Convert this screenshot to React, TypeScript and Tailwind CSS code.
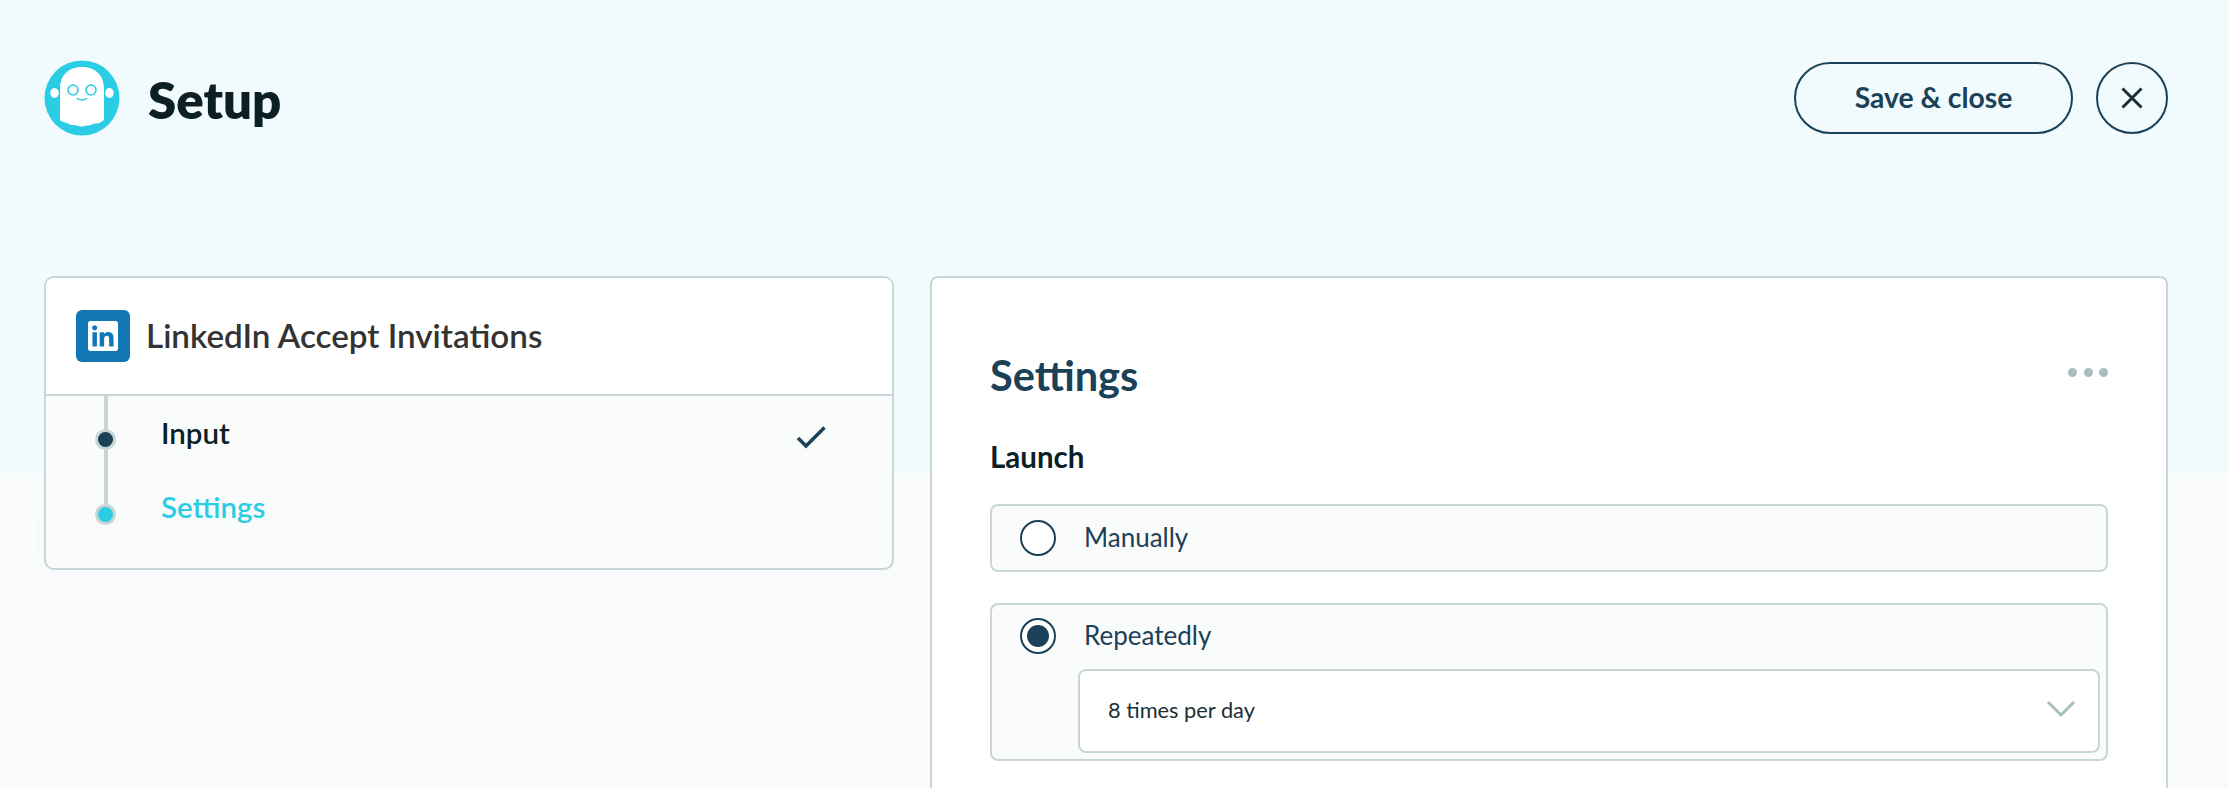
import React from "react";
import { SiLinkedin } from "react-icons/si";

const Logo: React.FC = () => (
  <svg width="76" height="76" viewBox="0 0 76 76" className="shrink-0">
    <circle cx="38" cy="38" r="37.5" fill="#2bcde4" />
    <ellipse cx="10.5" cy="33" rx="4.2" ry="5" fill="#fff" />
    <ellipse cx="65.5" cy="33" rx="4.2" ry="5" fill="#fff" />
    <path
      d="M16 60 V29 C16 14 26 7 38 7 C50 7 60 14 60 29 V60 C57 62 55 64 52 63.5 C49 63 47 66 43.5 65.5 C41 65 39.5 67 37 66.5 C34 66 32 64.5 29 65 C26 65.5 24 63 21 62.5 C19 62 17 61 16 60 Z"
      fill="#fff"
    />
    <circle cx="29" cy="30" r="5" fill="none" stroke="#2bcde4" strokeWidth="1.6" />
    <circle cx="47" cy="30" r="5" fill="none" stroke="#2bcde4" strokeWidth="1.6" />
    <path d="M33.5 38.5 C36 40.5 40 40.5 42.5 38.5" fill="none" stroke="#2bcde4" strokeWidth="1.6" strokeLinecap="round" />
  </svg>
);

const Radio: React.FC<{ checked?: boolean }> = ({ checked }) => (
  <div className="w-[36px] h-[36px] shrink-0 rounded-full border-2 border-[#1a4157] bg-white flex items-center justify-center">
    {checked && <div className="w-[22px] h-[22px] rounded-full bg-[#1a4157]"></div>}
  </div>
);

export default function App() {
  return (
    <div className="relative h-[788px] overflow-hidden bg-[linear-gradient(to_bottom,#f1fafc_473px,#f8fafc_473px)] font-['Lato',sans-serif]">
      {/* Stray highlight left of the steps card */}
      <div className="absolute left-[32px] top-[517px] w-[4px] h-[33px] bg-[#fdfdfe]"></div>

      {/* Header */}
      <div className="flex justify-between items-center pl-[44px] pr-[60px] pt-[60px] h-[136px]">
        <div className="flex items-center gap-[28px]">
          <Logo />
          <h1 className="text-[51px] leading-[60px] mt-[3px] font-extrabold text-[#0c1f25]">Setup</h1>
        </div>
        <div className="flex items-center gap-[23px] mt-[-1px]">
          <button className="w-[279px] h-[72px] rounded-full border-2 border-[#1a4157] text-[28.3px] font-bold text-[#1a4157]">
            Save &amp; close
          </button>
          <button className="w-[72px] h-[72px] rounded-full border-2 border-[#1a4157] flex items-center justify-center">
            <svg width="22" height="22" viewBox="0 0 22 22">
              <path d="M1.5 1.5 L20.5 20.5 M20.5 1.5 L1.5 20.5" stroke="#1c2f36" strokeWidth="3" />
            </svg>
          </button>
        </div>
      </div>

      <div className="flex items-start gap-[36px] pl-[44px] pr-[60px] pt-[140px]">
        {/* Steps card */}
        <div className="w-[850px] h-[294px] shrink-0 rounded-[10px] border-2 border-[#c8d6d8] overflow-hidden bg-[#fafbfb]">
          <div className="h-[118px] bg-white border-b-2 border-[#c8d6d8] flex items-center gap-[16px] pl-[30px]">
            <div className="w-[54px] h-[52px] mt-[-1px] rounded-[6px] bg-[#1277b5] flex items-center justify-center">
              <SiLinkedin className="w-[30px] h-[30px] text-white" />
            </div>
            <span className="text-[33.2px] leading-[40px] mt-[-2px] font-semibold text-[#333333]">LinkedIn Accept Invitations</span>
          </div>
          <div className="relative pl-[115px] pr-[66px] pt-px">
            <div className="absolute left-[58px] top-0 w-[4px] h-[118px] bg-[#c8d6d8]"></div>
            <div className="relative h-[74px] flex items-center justify-between">
              <div className="absolute left-[-66px] top-[32px] w-[21px] h-[21px] rounded-full bg-[#1a4157] border-[3px] border-[#c8d6d8]"></div>
              <span className="text-[29.5px] leading-[36px] mt-[-2px] font-semibold text-[#0c1f25]">Input</span>
              <svg width="30" height="24" viewBox="0 0 30 24" className="mt-[5px]">
                <path d="M2 13 L10 21 L28.5 2.5" fill="none" stroke="#1a4157" strokeWidth="3.5" />
              </svg>
            </div>
            <div className="relative h-[74px] flex items-center">
              <div className="absolute left-[-66px] top-[33px] w-[21px] h-[21px] rounded-full bg-[#2bcde4] border-[3px] border-[#c8d6d8]"></div>
              <span className="text-[29.5px] leading-[36px] mt-[-2px] font-semibold text-[#2bcde4]">Settings</span>
            </div>
          </div>
        </div>

        {/* Settings card */}
        <div className="w-[1238px] h-[600px] shrink-0 rounded-[8px] border-2 border-[#c8d6d8] bg-white pl-[58px] pr-[58px] pt-[72px]">
          <div className="flex items-center justify-between h-[50px]">
            <h2 className="text-[41.5px] leading-[50px] font-bold text-[#1a4157]">Settings</h2>
            <div className="flex gap-[6.5px] mb-[6px]">
              <div className="w-[9px] h-[9px] rounded-full bg-[#a9bdbf]"></div>
              <div className="w-[9px] h-[9px] rounded-full bg-[#a9bdbf]"></div>
              <div className="w-[9px] h-[9px] rounded-full bg-[#a9bdbf]"></div>
            </div>
          </div>
          <div className="mt-[40px] h-[34px] text-[29.5px] leading-[34px] font-bold text-[#0c1f25]">Launch</div>
          <div className="mt-[30px] h-[68px] rounded-[8px] border-2 border-[#c8d6d8] bg-[#fafbfb] flex items-center gap-[28px] pl-[28px]">
            <Radio />
            <span className="text-[26px] leading-[32px] mt-[-3px] text-[#1a4157]">Manually</span>
          </div>
          <div className="mt-[31px] h-[158px] rounded-[8px] border-2 border-[#c8d6d8] bg-[#fafbfb] pl-[28px] pt-[13px] pr-[6px]">
            <div className="flex items-center gap-[28px] h-[36px]">
              <Radio checked />
              <span className="text-[26px] leading-[32px] mt-[-3px] text-[#1a4157]">Repeatedly</span>
            </div>
            <div className="mt-[15px] ml-[58px] h-[84px] rounded-[8px] border-2 border-[#c8d6d8] bg-white flex items-center justify-between pl-[28px] pr-[22px]">
              <span className="text-[21.8px] leading-[28px] mt-[-2px] text-[#1c2f36]">8 times per day</span>
              <svg width="30" height="20" viewBox="0 0 30 20" className="mt-[-4px]">
                <path d="M2 3 L15 16 L28 3" fill="none" stroke="#a9bdbf" strokeWidth="3" />
              </svg>
            </div>
          </div>
        </div>
      </div>
    </div>
  );
}
